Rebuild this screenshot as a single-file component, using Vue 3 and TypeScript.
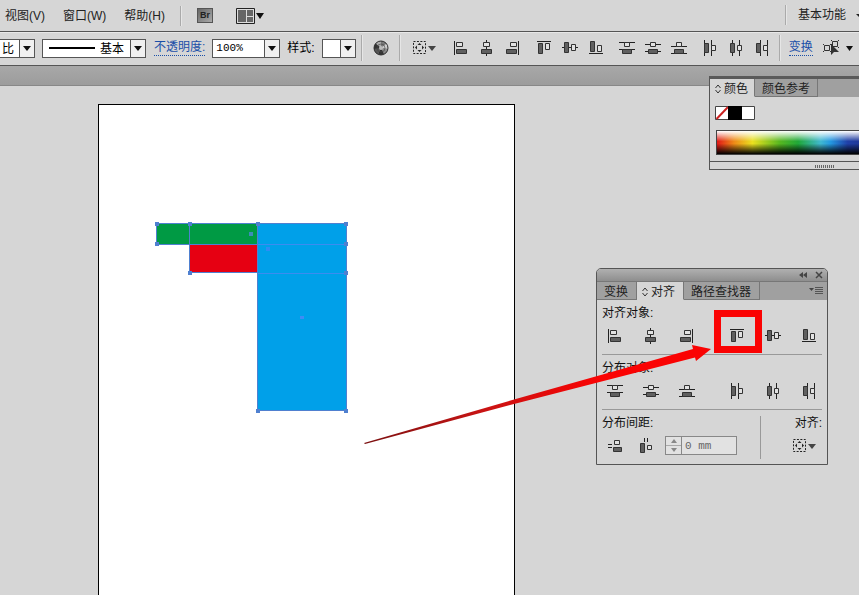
<script setup lang="ts">
import { ref } from 'vue'

interface Tool {
  id: string
  label: string
}

const alignH: Tool[] = [
  { id: 'h-left', label: '水平左对齐' },
  { id: 'h-center', label: '水平居中对齐' },
  { id: 'h-right', label: '水平右对齐' },
]
const alignV: Tool[] = [
  { id: 'v-top', label: '垂直顶对齐' },
  { id: 'v-center', label: '垂直居中对齐' },
  { id: 'v-bottom', label: '垂直底对齐' },
]
const distV: Tool[] = [
  { id: 'dv-top', label: '垂直顶分布' },
  { id: 'dv-center', label: '垂直居中分布' },
  { id: 'dv-bottom', label: '垂直底分布' },
]
const distH: Tool[] = [
  { id: 'dh-left', label: '水平左分布' },
  { id: 'dh-center', label: '水平居中分布' },
  { id: 'dh-right', label: '水平右分布' },
]

const toolbarGroups: Tool[][] = [alignH, alignV, distV, distH]
const panelSections = [
  { title: '对齐对象:', groups: [alignH, alignV] },
  { title: '分布对象:', groups: [distV, distH] },
]
const spacing: Tool[] = [
  { id: 's-vert', label: '垂直分布间距' },
  { id: 's-horz', label: '水平分布间距' },
]

const menus = ['视图(V)', '窗口(W)', '帮助(H)']
const opacity = ref('100%')
const gap = ref('0 mm')

const anchors: [number, number][] = [
  [157, 224], [190, 224], [258, 224], [346, 224],
  [157, 244], [346, 244], [190, 273], [346, 273],
  [258, 411], [346, 411],
]
</script>

<template>
  <div class="app">
    <svg class="sprite" aria-hidden="true">
      <defs>
        <symbol id="h-left" viewBox="0 0 16 16">
          <path class="ln" d="M1.500 1v14" /><path class="ho" d="M3.500 2.500h6v4h-6z" /><path class="fi" d="M3.500 9.500h10v4h-10z" />
        </symbol>
        <symbol id="h-center" viewBox="0 0 16 16">
          <path class="ln" d="M7.500 0v2M7.500 7v2M7.500 14v2" /><path class="ho" d="M4.500 2.500h6v4h-6z" /><path class="fi" d="M2.500 9.500h10v4h-10z" />
        </symbol>
        <symbol id="h-right" viewBox="0 0 16 16">
          <path class="ln" d="M13.500 1v14" /><path class="ho" d="M5.500 2.500h6v4h-6z" /><path class="fi" d="M1.500 9.500h10v4h-10z" />
        </symbol>
        <symbol id="v-top" viewBox="0 0 16 16">
          <path class="ln" d="M1 1.500h14" /><path class="fi" d="M2.500 3.500h4v10h-4z" /><path class="ho" d="M9.500 3.500h4v6h-4z" />
        </symbol>
        <symbol id="v-center" viewBox="0 0 16 16">
          <path class="ln" d="M0 7.500h2M7 7.500h2M14 7.500h2" /><path class="fi" d="M2.500 2.500h4v10h-4z" /><path class="ho" d="M9.500 4.500h4v6h-4z" />
        </symbol>
        <symbol id="v-bottom" viewBox="0 0 16 16">
          <path class="ln" d="M1 13.500h14" /><path class="fi" d="M2.500 1.500h4v10h-4z" /><path class="ho" d="M9.500 5.500h4v6h-4z" />
        </symbol>
        <symbol id="dv-top" viewBox="0 0 16 16">
          <path class="ln" d="M0 2.500h16M0 9.500h16" /><path class="ho" d="M5.500 2.500h5v4h-5z" /><path class="fi" d="M3.500 9.500h9v4h-9z" />
        </symbol>
        <symbol id="dv-center" viewBox="0 0 16 16">
          <path class="ln" d="M0 4.500h5M11 4.500h5M0 11.500h16" /><path class="ho" d="M5.500 2.500h5v4h-5z" /><path class="fi" d="M3.500 9.500h9v4h-9z" />
        </symbol>
        <symbol id="dv-bottom" viewBox="0 0 16 16">
          <path class="ln" d="M0 6.500h16M0 13.500h16" /><path class="ho" d="M5.500 2.500h5v4h-5z" /><path class="fi" d="M3.500 9.500h9v4h-9z" />
        </symbol>
        <symbol id="dh-left" viewBox="0 0 16 16">
          <path class="ln" d="M2.500 0v16M9.500 0v16" /><path class="fi" d="M2.500 3.500h4v9h-4z" /><path class="ho" d="M9.500 5.500h4v5h-4z" />
        </symbol>
        <symbol id="dh-center" viewBox="0 0 16 16">
          <path class="ln" d="M4.500 0v16M11.500 0v5M11.500 11v5" /><path class="fi" d="M2.500 3.500h4v9h-4z" /><path class="ho" d="M9.500 5.500h4v5h-4z" />
        </symbol>
        <symbol id="dh-right" viewBox="0 0 16 16">
          <path class="ln" d="M6.500 0v16M13.500 0v16" /><path class="fi" d="M2.500 3.500h4v9h-4z" /><path class="ho" d="M9.500 5.500h4v5h-4z" />
        </symbol>
        <symbol id="s-vert" viewBox="0 0 16 16">
          <path class="ln" d="M1 6.500h4M1 9.500h4" /><path class="ho" d="M7.500 2.500h5v4h-5z" /><path class="fi" d="M6.500 9.500h8v4h-8z" />
        </symbol>
        <symbol id="s-horz" viewBox="0 0 16 16">
          <path class="ln" d="M6.500 0v4M9.500 0v4" /><path class="fi" d="M2.500 5.500h4v9h-4z" /><path class="ho" d="M9.500 7.500h4v4h-4z" />
        </symbol>
        <symbol id="marquee" viewBox="0 0 24 16">
          <path d="M1.500 1.500h12v12h-12z" fill="none" stroke="#222" stroke-dasharray="2 1.430" />
          <path d="M7.500 3l2 2h-4zM7.500 12l2-2h-4zM3 7.500l2-2v4zM12 7.500l-2-2v4z" fill="#222" />
          <path d="M16 6h8l-4 5z" fill="#444" />
        </symbol>
      </defs>
    </svg>

    <header class="menubar">
      <nav class="menus">
        <button v-for="m in menus" :key="m" class="menu" type="button">{{ m }}</button>
      </nav>
      <span class="rule" />
      <button class="bridge" type="button">Br</button>
      <button class="plain" type="button" aria-label="排列文档">
        <svg width="28" height="16" viewBox="0 0 28 16">
          <path d="M.5.5h18v15H.5z" fill="#ddd" stroke="#222" />
          <path d="M2 2h8v12H2zM11 2h6v6h-6zM11 9h6v5h-6z" fill="#666" />
          <path d="M20 5h8l-4 6z" fill="#111" />
        </svg>
      </button>
      <div class="workspace-pick">
        <span class="rule" />
        <button class="menu" type="button">基本功能</button>
        <svg width="8" height="16" viewBox="0 0 8 16"><path d="M0 7h8l-4 4z" fill="#222" /></svg>
      </div>
    </header>

    <div class="control">
      <div class="combo ratio">
        <select aria-label="变量宽度配置文件"><option>比</option></select>
        <span class="drop" />
      </div>
      <div class="combo brush">
        <span class="stroke" />
        <select aria-label="画笔定义"><option>基本</option></select>
        <span class="drop" />
      </div>
      <label class="link" for="opacity">不透明度:</label>
      <div class="combo opacity">
        <input id="opacity" v-model="opacity" type="text">
        <button class="drop" type="button" aria-label="不透明度预设" />
      </div>
      <label class="style-label" for="style">样式:</label>
      <div class="combo swatch">
        <select id="style"><option /></select>
        <span class="drop" />
      </div>
      <span class="rule first" />
      <button class="plain globe" type="button" aria-label="重新着色图稿">
        <svg width="16" height="16" viewBox="0 0 16 16">
          <circle cx="8" cy="8" r="7" fill="#777" />
          <path d="M8 8L2.500 3.500A7 7 0 0 1 8 1z" fill="#aaa" /><path d="M8 8V1a7 7 0 0 1 5.500 2.500z" fill="#777" />
          <path d="M8 8l5.500-4.500A7 7 0 0 1 15 9z" fill="#ccc" /><path d="M8 8l7 1a7 7 0 0 1-4 5.300z" fill="#888" />
          <path d="M8 8l3 6.300a7 7 0 0 1-6 0z" fill="#333" /><path d="M8 8l-3 6.300A7 7 0 0 1 1 9z" fill="#555" />
          <path d="M8 8L1 9a7 7 0 0 1 1.500-5.500z" fill="#333" />
          <circle cx="8" cy="8" r="4" fill="none" stroke="#444" stroke-width=".6" />
          <circle cx="8" cy="8" r="2" fill="#bbb" />
          <circle cx="8" cy="8" r="7" fill="none" stroke="#333" />
        </svg>
      </button>
      <span class="rule" />
      <button class="plain marquee" type="button" aria-label="对齐所选对象">
        <svg width="24" height="16"><use href="#marquee" /></svg>
      </button>
      <div class="tool-groups">
        <div v-for="(g, i) in toolbarGroups" :key="i" class="tools">
          <button v-for="t in g" :key="t.id" class="plain" type="button" :aria-label="t.label">
            <svg width="16" height="16"><use :href="'#' + t.id" /></svg>
          </button>
        </div>
      </div>
      <span class="rule last" />
      <a class="link" href="#transform">变换</a>
      <button class="plain isolate" type="button" aria-label="选择类似对象">
        <svg width="30" height="16" viewBox="0 0 30 16">
          <path d="M1.500 5.500h5v5h-5zM9.500 1.500h5v5h-5z" fill="none" stroke="#333" />
          <path d="M0 4.500h1M0 11.500h1M7 4.500h2M7 11.500h1M15 .5h1M15 7.500h1M8 .5h1" stroke="#333" />
          <path d="M8 4v11l3-3h5z" fill="#333" />
          <path d="M23 6h7l-3.500 5z" fill="#111" />
        </svg>
      </button>
    </div>

    <div class="docbar" />

    <main class="canvas">
      <div class="artboard" />
    </main>

    <svg class="art" aria-hidden="true">
      <rect x="157" y="224" width="101" height="20" fill="#009a44" />
      <rect x="190" y="245" width="68" height="28" fill="#e60012" />
      <rect x="257" y="224" width="89" height="187" fill="#00a0e9" />
      <g fill="none" stroke="#4f80d0">
        <path d="M156.500 223.500h190M156.500 223.500v21M189.500 223.500v49h68M156.500 244.500h101M257.500 223.500v187h89v-187" />
        <path d="M258 244.500h88M258 273.500h88" stroke="#3c8cf0" />
      </g>
      <rect v-for="(a, i) in anchors" :key="i" :x="a[0] - 2" :y="a[1] - 2" width="4" height="4" fill="#4f80d0" />
      <rect x="249" y="232" width="4" height="4" fill="#3d8cb8" />
      <rect x="266" y="247" width="4" height="4" fill="#2f8cf5" />
      <rect x="300" y="316" width="4" height="3" fill="#3f8cf5" />
    </svg>

    <section class="panel color-panel">
      <div class="tabs">
        <button class="tab active" type="button">
          <svg width="6" height="10" viewBox="0 0 6 10"><path d="M.5 4L3 1l2.500 3M.5 6L3 9l2.500-3" fill="none" stroke="#333" /></svg>颜色
        </button>
        <button class="tab" type="button">颜色参考</button>
      </div>
      <div class="color-body">
        <svg class="chips" width="40" height="14" viewBox="0 0 40 14">
          <path d="M.5.5h39v13H.5z" fill="#fff" stroke="#444" />
          <path d="M1.500 13L13 1" stroke="#c22" stroke-width="2" />
          <path d="M13 0h14v14H13z" fill="#000" />
        </svg>
        <div class="spectrum" />
      </div>
      <div class="grip"><span /></div>
    </section>

    <section class="panel align-panel">
      <div class="titlebar">
        <button class="plain" type="button" aria-label="折叠">
          <svg width="8" height="8" viewBox="0 0 8 8"><path d="M4 1v6L0 4zM8 1v6L4 4z" fill="#444" /></svg>
        </button>
        <button class="plain" type="button" aria-label="关闭">
          <svg width="8" height="8" viewBox="0 0 8 8"><path d="M1 1l6 6M7 1L1 7" stroke="#444" stroke-width="1.500" /></svg>
        </button>
      </div>
      <div class="tabs">
        <button class="tab" type="button">变换</button>
        <button class="tab active" type="button">
          <svg width="6" height="10" viewBox="0 0 6 10"><path d="M.5 4L3 1l2.500 3M.5 6L3 9l2.500-3" fill="none" stroke="#333" /></svg>对齐
        </button>
        <button class="tab" type="button">路径查找器</button>
        <button class="plain flyout" type="button" aria-label="面板菜单">
          <svg width="14" height="10" viewBox="0 0 14 10"><path d="M0 2h5L2.500 5z" fill="#444" /><path d="M6 1.500h8M6 3.500h8M6 5.500h8M6 7.500h8" stroke="#555" /></svg>
        </button>
      </div>
      <div class="align-body">
        <div v-for="s in panelSections" :key="s.title" class="section">
          <h2>{{ s.title }}</h2>
          <div class="section-tools">
            <div v-for="(g, i) in s.groups" :key="i" class="tools">
              <button v-for="t in g" :key="t.id" class="plain" type="button" :aria-label="t.label">
                <svg width="16" height="16"><use :href="'#' + t.id" /></svg>
              </button>
            </div>
          </div>
        </div>
        <div class="section bottom">
          <div class="spacing">
            <h2><label for="gap">分布间距:</label></h2>
            <div class="spacing-row">
              <button v-for="t in spacing" :key="t.id" class="plain" type="button" :aria-label="t.label">
                <svg width="16" height="16"><use :href="'#' + t.id" /></svg>
              </button>
              <div class="spinner">
                <div class="steps">
                  <button type="button" aria-label="增加" disabled><svg width="6" height="4" viewBox="0 0 6 4"><path d="M0 4h6L3 0z" fill="#888" /></svg></button>
                  <button type="button" aria-label="减少" disabled><svg width="6" height="4" viewBox="0 0 6 4"><path d="M0 0h6L3 4z" fill="#888" /></svg></button>
                </div>
                <input id="gap" v-model="gap" type="text" disabled>
              </div>
            </div>
          </div>
          <div class="align-to">
            <h2>对齐:</h2>
            <button class="plain" type="button" aria-label="对齐到">
              <svg width="24" height="16"><use href="#marquee" /></svg>
            </button>
          </div>
        </div>
      </div>
    </section>

    <svg class="art" aria-hidden="true">
      <defs>
        <linearGradient id="arrow" gradientUnits="userSpaceOnUse" x1="364" y1="0" x2="600" y2="0">
          <stop offset="0" stop-color="#7a1010" /><stop offset=".5" stop-color="#c81414" /><stop offset="1" stop-color="#fa0303" />
        </linearGradient>
      </defs>
      <path d="M364 443L514 399.500L693 349L692 345L711 349L696 361L695 357.500L514 404L365 444z" fill="url(#arrow)" />
      <path d="M717.500 313.500h41v36h-41z" fill="none" stroke="#fa0303" stroke-width="7" />
    </svg>
  </div>
</template>

<style>
body {
  margin: 0;
}
</style>

<style scoped>
.app {
  position: relative;
  display: flex;
  flex-direction: column;
  height: 100vh;
  overflow: hidden;
  background: #d6d6d6;
  color: #222;
  font: 12px/18px "Liberation Sans", "Noto Sans CJK SC", sans-serif;
}
.app * {
  box-sizing: border-box;
}
button, input, select {
  font: inherit;
  color: inherit;
  margin: 0;
  padding: 0;
  border: 0;
  border-radius: 0;
  background: none;
}
svg {
  display: block;
  flex: none;
}
h2 {
  margin: 0;
  font: inherit;
  color: #111;
}
.sprite {
  position: absolute;
  width: 0;
  height: 0;
}
.ln {
  fill: none;
  stroke: #222;
}
.ho {
  fill: #e2e2e2;
  stroke: #333;
}
.fi {
  fill: #606060;
  stroke: #333;
}
.plain {
  display: block;
  flex: none;
}
.rule {
  flex: none;
  width: 2px;
  background: #aaa;
  border-right: 1px solid #e6e6e6;
}
.menubar {
  display: flex;
  flex: none;
  align-items: center;
  height: 32px;
  padding-left: 5px;
  border-bottom: 1px solid #555;
}
.menus {
  display: flex;
  gap: 18px;
  margin-right: 15px;
}
.menu {
  white-space: nowrap;
}
.menubar .rule {
  height: 20px;
}
.bridge {
  width: 16px;
  height: 15px;
  margin: 0 23px 0 15px;
  border: 1px solid #555;
  background: linear-gradient(135deg, #666, #aaa);
  font-size: 9px;
  font-weight: bold;
  line-height: 13px;
}
.workspace-pick {
  display: flex;
  align-items: center;
  margin: 0 -5px 2px auto;
}
.workspace-pick .menu {
  margin: 0 10px 0 11px;
}
.control {
  display: flex;
  flex: none;
  align-items: center;
  height: 34px;
  padding-bottom: 2px;
  border-top: 1px solid #e8e8e8;
  border-bottom: 1px solid #555;
  white-space: nowrap;
}
.combo {
  display: flex;
  flex: none;
  align-items: center;
  height: 19px;
  border: 1px solid #555;
  background: #fff;
  color: #000;
}
.combo select, .combo input {
  flex: 1;
  min-width: 0;
  height: 17px;
  appearance: none;
  outline: 0;
}
.combo .drop {
  flex: none;
  display: flex;
  align-items: center;
  justify-content: center;
  width: 15px;
  height: 17px;
  border-left: 1px solid #555;
  background: #f0f0f0;
  pointer-events: none;
}
.drop::after {
  content: "";
  border: 4px solid transparent;
  border-top: 5px solid #111;
  border-bottom: 0;
}
.ratio {
  width: 35px;
  margin-right: 7px;
  border-left: 0;
}
.ratio select {
  padding-left: 2px;
}
.brush {
  width: 104px;
  margin-right: 8px;
}
.stroke {
  width: 46px;
  height: 2px;
  margin: 0 5px 0 6px;
  background: #000;
}
.link {
  color: #1a4fa8;
  line-height: 15px;
  text-decoration: none;
  border-bottom: 1px dotted #1a4fa8;
}
.opacity {
  width: 68px;
  margin: 0 7px;
}
.opacity input {
  padding-left: 3px;
}
.opacity input, .spinner input {
  font-family: "Liberation Mono", monospace;
  font-size: 11px;
}
.style-label {
  color: #000;
  margin-right: 7px;
}
.swatch {
  width: 34px;
}
.control .rule {
  height: 26px;
}
.control .first {
  margin-left: 5px;
}
.globe {
  margin: 0 10px;
}
.marquee {
  margin: 0 17px 0 11px;
}
.tool-groups {
  display: flex;
  gap: 15px;
}
.tools {
  display: flex;
  gap: 10px;
}
.control .last {
  margin: 0 8px 0 9px;
}
.isolate {
  margin-left: 10px;
}
.docbar {
  flex: none;
  height: 20px;
  background: linear-gradient(#a8a8a8, #9c9c9c);
  border-bottom: 1px solid #888;
}
.canvas {
  display: flex;
  flex: 1;
  padding: 18px 0 0 98px;
}
.artboard {
  width: 417px;
  border: 1px solid #000;
  border-bottom: 0;
  background: #fff;
}
.art {
  position: absolute;
  inset: 0;
  width: 100%;
  height: 100%;
  pointer-events: none;
}
.panel {
  position: absolute;
  border: 1px solid #555;
  background: #d6d6d6;
}
.tabs {
  display: flex;
  height: 18px;
  background: #a0a0a0;
}
.tab {
  display: flex;
  align-items: center;
  gap: 3px;
  height: 18px;
  padding: 2px 7px 0;
  border-right: 1px solid #777;
  border-bottom: 1px solid #777;
  white-space: nowrap;
}
.tab.active {
  padding: 2px 6px 0 5px;
  background: #d6d6d6;
  border-bottom-color: #d6d6d6;
}
.align-panel .tab {
  padding-right: 8px;
}
.color-panel {
  top: 76px;
  left: 709px;
  right: 0;
  border-top: 3px solid #5a5a5a;
  border-right: 0;
}
.color-body {
  padding: 9px 0 6px 5px;
}
.spectrum {
  height: 25px;
  margin: 10px 0 0 1px;
  border: 1px solid #444;
  border-right: 0;
  background:
    linear-gradient(#fff 0%, #fff0 45%, #0000 55%, #000 100%),
    linear-gradient(90deg, #e01818, #ee8a18 12%, #eae020 25%, #58b820 44%, #20a838 57%, #40b8d0 73%, #2498e0 80%, #2040a8 92%, #203898);
}
.grip {
  display: flex;
  justify-content: center;
  height: 8px;
  padding: 3px 0 0 80px;
  border-top: 1px solid #555;
}
.grip span {
  width: 20px;
  height: 3px;
  background: repeating-linear-gradient(90deg, #666 0 1px, #d6d6d6 1px 2px);
}
.align-panel {
  top: 268px;
  left: 596px;
  width: 232px;
  height: 197px;
  border-radius: 5px 5px 0 0;
}
.titlebar {
  display: flex;
  align-items: center;
  justify-content: flex-end;
  gap: 8px;
  height: 13px;
  padding-right: 4px;
  border-bottom: 1px solid #777;
  border-radius: 4px 4px 0 0;
  background: linear-gradient(#b0b0b0, #8e8e8e);
}
.flyout {
  align-self: center;
  margin: 0 4px 0 auto;
}
.align-body {
  padding: 0 5px;
}
.section {
  height: 55px;
  padding-top: 4px;
  border-bottom: 1px solid #999;
}
.section-tools {
  display: flex;
  gap: 34px;
  padding: 6px 0 0 5px;
}
.section-tools .tools {
  gap: 20px;
}
.section.bottom {
  display: flex;
  justify-content: space-between;
  border-bottom: 0;
}
.spacing {
  flex: 1;
}
.spacing-row {
  display: flex;
  align-items: center;
  gap: 15px;
  padding: 4px 0 0 5px;
}
.spinner {
  display: flex;
  width: 72px;
  height: 19px;
  margin-left: -4px;
  border: 1px solid #888;
  background: #e2e2e2;
  color: #666;
}
.steps {
  display: flex;
  flex-direction: column;
  width: 16px;
  border-right: 1px solid #888;
}
.steps button {
  display: flex;
  flex: 1;
  align-items: center;
  justify-content: center;
}
.steps button + button {
  border-top: 1px solid #aaa;
}
.spinner input {
  flex: 1;
  min-width: 0;
  padding-left: 3px;
}
.align-to {
  display: flex;
  flex-direction: column;
  align-items: flex-end;
  gap: 6px;
  width: 62px;
  height: 43px;
  margin-top: 2px;
  border-left: 1px solid #999;
}
.align-to h2 {
  margin-top: -2px;
}
.align-to .plain {
  margin-right: 6px;
}
</style>
